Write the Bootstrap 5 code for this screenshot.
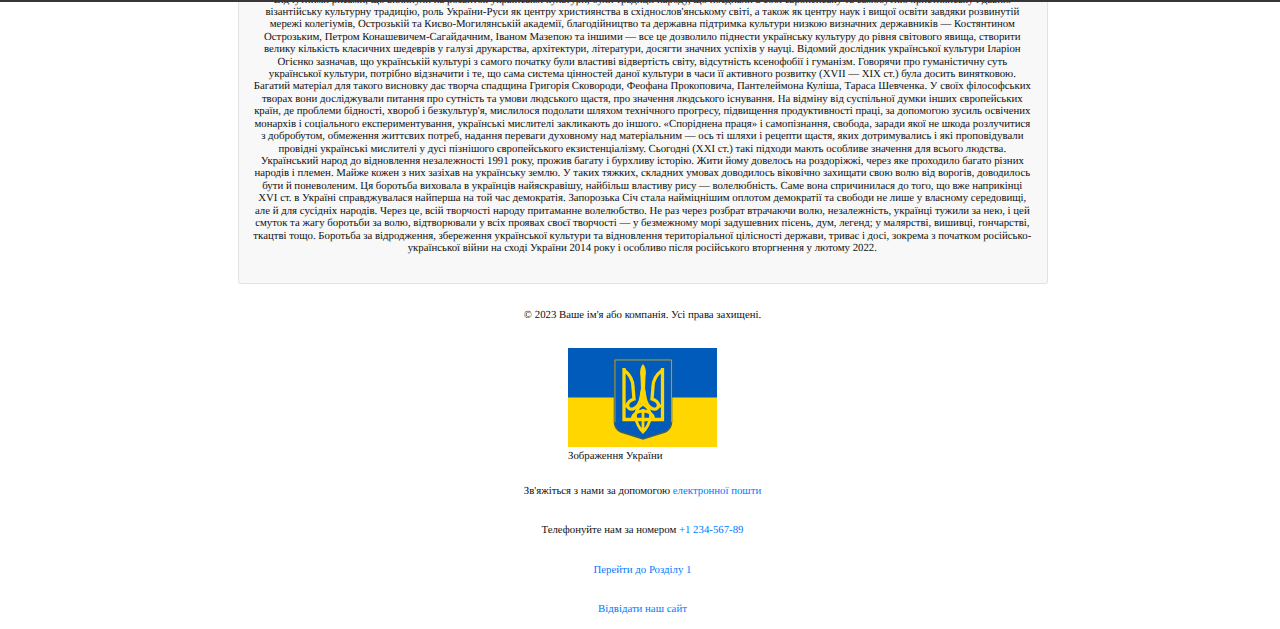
<!DOCTYPE html>
<html lang="uk">
<head>
<meta charset="utf-8">
<meta name="viewport" content="width=device-width, initial-scale=1">
<title>Культура України</title>
<link rel="stylesheet" href="https://cdn.jsdelivr.net/npm/bootstrap@5.3.0/dist/css/bootstrap.min.css">
<style>
body{font-family:"Liberation Serif","Times New Roman",serif;font-size:10.8px;line-height:12.42px;color:#111;height:629px;text-rendering:geometricPrecision}
.topbar{height:2px;background:#3a3637;flex:none}
.article{width:810px;height:282px;margin-left:238px;background:#f8f8f8;border:1px solid #e3e3e3;border-top:0;border-radius:0 0 3px 3px;flex:none}
.article p{margin-top:-8.5px;margin-right:1.4px}
.article span{display:block;white-space:nowrap}
.foot{width:810px;margin-left:237.5px}
.foot a{color:#007bff}
.flag{width:149px}
.copy{margin-top:25px}
.gap-lg{margin-top:27px}
.gap-md{margin-top:22px}
.flag figcaption{margin-top:3px}
</style>
</head>
<body class="d-flex flex-column overflow-hidden bg-white">
<div class="topbar"></div>
<main class="article text-center overflow-hidden">
<p class="mb-0">
<span>Відчутними рисами, що вплинули на розвиток української культури, були традиції народу, що поєднали в собі європейську та самобутню християнську і давню</span>
<span>візантійську культурну традицію, роль України-Руси як центру християнства в східнослов'янському світі, а також як центру наук і вищої освіти завдяки розвинутій</span>
<span>мережі колегіумів, Острозькій та Києво-Могилянській академії, благодійництво та державна підтримка культури низкою визначних державників — Костянтином</span>
<span>Острозьким, Петром Конашевичем-Сагайдачним, Іваном Мазепою та іншими — все це дозволило піднести українську культуру до рівня світового явища, створити</span>
<span>велику кількість класичних шедеврів у галузі друкарства, архітектури, літератури, досягти значних успіхів у науці. Відомий дослідник української культури Іларіон</span>
<span>Огієнко зазначав, що українській культурі з самого початку були властиві відвертість світу, відсутність ксенофобії і гуманізм. Говорячи про гуманістичну суть</span>
<span>української культури, потрібно відзначити і те, що сама система цінностей даної культури в часи її активного розвитку (XVII — XIX ст.) була досить винятковою.</span>
<span>Багатий матеріал для такого висновку дає творча спадщина Григорія Сковороди, Феофана Прокоповича, Пантелеймона Куліша, Тараса Шевченка. У своїх філософських</span>
<span>творах вони досліджували питання про сутність та умови людського щастя, про значення людського існування. На відміну від суспільної думки інших європейських</span>
<span>країн, де проблеми бідності, хвороб і безкультур'я, мислилося подолати шляхом технічного прогресу, підвищення продуктивності праці, за допомогою зусиль освічених</span>
<span>монархів і соціального експериментування, українські мислителі закликають до іншого. «Споріднена праця» і самопізнання, свобода, заради якої не шкода розлучитися</span>
<span>з добробутом, обмеження життєвих потреб, надання переваги духовному над матеріальним — ось ті шляхи і рецепти щастя, яких дотримувались і які проповідували</span>
<span>провідні українські мислителі у дусі пізнішого європейського екзистенціалізму. Сьогодні (XXI ст.) такі підходи мають особливе значення для всього людства.</span>
<span>Український народ до відновлення незалежності 1991 року, прожив багату і бурхливу історію. Жити йому довелось на роздоріжжі, через яке проходило багато різних</span>
<span>народів і племен. Майже кожен з них зазіхав на українську землю. У таких тяжких, складних умовах доводилось віковічно захищати свою волю від ворогів, доводилось</span>
<span>бути й поневоленим. Ця боротьба виховала в українців найяскравішу, найбільш властиву рису — волелюбність. Саме вона спричинилася до того, що вже наприкінці</span>
<span>XVI ст. в Україні справджувалася найперша на той час демократія. Запорозька Січ стала найміцнішим оплотом демократії та свободи не лише у власному середовищі,</span>
<span>але й для сусідніх народів. Через це, всій творчості народу притаманне волелюбство. Не раз через розбрат втрачаючи волю, незалежність, українці тужили за нею, і цей</span>
<span>смуток та жагу боротьби за волю, відтворювали у всіх проявах своєї творчості — у безмежному морі задушевних пісень, дум, легенд; у малярстві, вишивці, гончарстві,</span>
<span>ткацтві тощо. Боротьба за відродження, збереження української культури та відновлення територіальної цілісності держави, триває і досі, зокрема з початком російсько-</span>
<span>української війни на сході України 2014 року і особливо після російського вторгнення у лютому 2022.</span>
</p>
</main>
<footer class="foot d-flex flex-column align-items-center">
<p class="mb-0 copy">© 2023 Ваше ім'я або компанія. Усі права захищені.</p>
<figure class="flag mb-0 gap-lg">
<svg class="d-block" width="149" height="99" viewBox="0 0 149 99">
<rect width="149" height="99" fill="#ffd600"/><rect width="149" height="49.5" fill="#005bbb"/>
<path d="M46.500 11.500H103.500V74Q103.500 81 97 84L75 91L53 84Q46.500 81 46.500 74Z" fill="#005bbb" stroke="#3f5f60" stroke-width="1.6"/>
<path d="M47 74V12H103.500V74" fill="none" stroke="#b5ad48" stroke-width=".8"/>
<g fill="none" stroke="#ffd600" stroke-width="3.300">
<path d="M56 20V71.500H94.500V20"/>
<path d="M56 22Q65 29 65 39L66 51Q60 53 59.500 57Q60 62 65 61Q71 59 73 50L75 38L77 50Q79 59 85 61Q90 62 90.500 57Q90 53 84 51L85 39Q85 29 94.500 22"/>
<path d="M56 58H60M90 58H94M75 56Q67 61 67.500 69Q69 78 75 84Q81 78 82.500 69Q83 61 75 56ZM75 61V83M64 71Q66 63 75 63Q84 63 86 71" stroke-width="2.800"/>
</g>
<path d="M75 16Q79 20 77.500 29L77 42L79 53L75 58L71 53L73 42L72.500 29Q71 20 75 16Z" fill="#ffd600"/>
</svg>
<figcaption>Зображення України</figcaption>
</figure>
<p class="mb-0 gap-md">Зв'яжіться з нами за допомогою <a class="text-decoration-none" href="#">електронної пошти</a></p>
<p class="mb-0 gap-lg">Телефонуйте нам за номером <a class="text-decoration-none" href="#">+1 234-567-89</a></p>
<p class="mb-0 gap-lg"><a class="text-decoration-none" href="#">Перейти до Розділу 1</a></p>
<p class="mb-0 gap-lg"><a class="text-decoration-none" href="#">Відвідати наш сайт</a></p>
</footer>
<script src="https://cdn.jsdelivr.net/npm/bootstrap@5.3.0/dist/js/bootstrap.bundle.min.js"></script>
</body>
</html>
